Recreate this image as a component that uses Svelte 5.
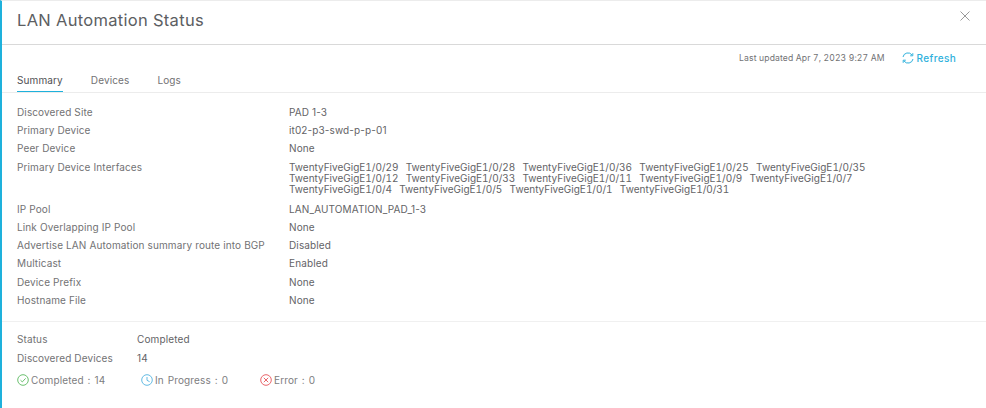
<script lang="ts">
  const summary = [
    { label: "Discovered Site", value: "PAD 1-3" },
    { label: "Primary Device", value: "it02-p3-swd-p-p-01" },
    { label: "Peer Device", value: "None" },
    {
      label: "Primary Device Interfaces",
      lines: [
        ["29", "28", "36", "25", "35"],
        ["12", "33", "11", "9", "7"],
        ["4", "5", "1", "31"],
      ],
    },
    { label: "IP Pool", value: "LAN_AUTOMATION_PAD_1-3" },
    { label: "Link Overlapping IP Pool", value: "None" },
    { label: "Advertise LAN Automation summary route into BGP", value: "Disabled" },
    { label: "Multicast", value: "Enabled" },
    { label: "Device Prefix", value: "None" },
    { label: "Hostname File", value: "None" },
  ];

  const tabs = ["Summary", "Devices", "Logs"];
</script>

<div class="panel">
  <header class="head">
    <h1>LAN Automation Status</h1>
    <svg class="close" width="10" height="10" viewBox="0 0 10 10" aria-label="Close">
      <path d="M.5.5l9 9M9.500.5l-9 9" />
    </svg>
  </header>

  <div class="updated">
    <span>Last updated Apr 7, 2023 9:27 AM</span>
    <span class="refresh">
      <svg width="12" height="12" viewBox="0 0 12 12">
        <path d="M1 5A5 5 0 0 1 10 3M11 7A5 5 0 0 1 2 9" />
        <path class="tip" d="M10.800 1.200v2.600H8.200M1.200 10.800V8.200h2.600" />
      </svg>
      Refresh
    </span>
  </div>

  <nav class="tabs">
    {#each tabs as tab, i}
      <span class="tab" class:active={i === 0}>{tab}</span>
    {/each}
  </nav>

  <dl class="summary">
    {#each summary as row}
      <div class="row">
        <dt>{row.label}</dt>
        <dd>
          {#if row.lines}
            {#each row.lines as line}
              <div class="ports">
                {#each line as port}
                  <span>TwentyFiveGigE1/0/{port}</span>
                {/each}
              </div>
            {/each}
          {:else}
            {row.value}
          {/if}
        </dd>
      </div>
    {/each}
  </dl>

  <section class="status">
    <div class="line">
      <span class="key">Status</span>
      <span class="val">Completed</span>
    </div>
    <div class="line">
      <span class="key">Discovered Devices</span>
      <span class="val">14</span>
    </div>
    <div class="counts">
      <span class="count first">
        <svg class="green" width="12" height="12" viewBox="0 0 12 12">
          <circle cx="6" cy="6" r="5.300" />
          <path d="M3.500 6.200l1.800 1.700 3.300-3.500" />
        </svg>
        Completed : 14
      </span>
      <span class="count second">
        <svg class="blue" width="12" height="12" viewBox="0 0 12 12">
          <circle cx="6" cy="6" r="5.300" />
          <path d="M6 3v3.300l2.600 1.400" />
        </svg>
        In Progress : 0
      </span>
      <span class="count">
        <svg class="red" width="12" height="12" viewBox="0 0 12 12">
          <circle cx="6" cy="6" r="5.300" />
          <path d="M3.800 3.800l4.400 4.400M8.200 3.800l-4.400 4.400" />
        </svg>
        Error : 0
      </span>
    </div>
  </section>
</div>

<style>
  :global(body) {
    background: #fff;
  }

  .panel {
    box-sizing: border-box;
    width: 986px;
    height: 408px;
    overflow: hidden;
    background: #fff;
    border-left: 2px solid #1eb1dc;
    border-top: 1px solid #ececec;
    font-family: Inter, "Open Sans", sans-serif;
    font-size: 10px;
    letter-spacing: 0.12px;
    color: #636366;
  }

  .head {
    display: flex;
    align-items: center;
    justify-content: space-between;
    box-sizing: border-box;
    height: 44px;
    padding: 0 16px 6px 15px;
    border-bottom: 1px solid #d9d9d9;
  }

  h1 {
    margin: 0;
    font-size: 16.500px;
    font-weight: 400;
    letter-spacing: 0.3px;
    color: #5c5e62;
  }

  .close {
    margin-top: -7px;
    fill: none;
    stroke: #9a9a9a;
  }

  .updated {
    display: flex;
    justify-content: flex-end;
    align-items: center;
    gap: 17px;
    height: 25px;
    margin-bottom: 2px;
    padding-right: 30px;
    font-size: 8.600px;
    font-variant-numeric: tabular-nums;
    color: #727274;
  }

  .refresh {
    display: flex;
    align-items: center;
    gap: 3px;
    font-size: 10px;
    letter-spacing: 0.35px;
    font-weight: 500;
    color: #2fb1dc;
  }

  .refresh svg {
    fill: none;
    stroke: #2fb1dc;
  }

  .tabs {
    display: flex;
    gap: 28px;
    height: 20px;
    padding-left: 15px;
    border-bottom: 1px solid #ececec;
  }

  .tab {
    box-sizing: border-box;
    height: 20px;
    line-height: 16px;
    color: #727274;
  }

  .tab.active {
    color: #505053;
    border-bottom: 1px solid #1eb1dc;
  }

  .summary {
    margin: 9.700px 0 0;
    padding: 0 15px;
    border-bottom: 1px solid #f0f0f0;
    height: 218.300px;
  }

  .row {
    display: flex;
    line-height: 18.300px;
  }

  dt {
    width: 272px;
    flex-shrink: 0;
    color: #727274;
  }

  dd {
    margin: 0;
    color: #636366;
  }

  .ports {
    display: flex;
    gap: 7.300px;
    line-height: 11px;
    letter-spacing: 0;
    font-variant-numeric: tabular-nums;
  }

  .ports:first-child {
    margin-top: 4px;
  }

  .ports:last-child {
    margin-bottom: 5px;
  }

  .status {
    padding: 8px 15px 0;
  }

  .line {
    display: flex;
    line-height: 19px;
  }

  .key {
    width: 120px;
    color: #727274;
  }

  .val {
    color: #636366;
  }

  .counts {
    display: flex;
    margin-top: 6px;
  }

  .count {
    display: flex;
    align-items: center;
    gap: 2px;
    word-spacing: 1px;
    color: #7d7d80;
  }

  .first {
    width: 124px;
  }

  .second {
    width: 119px;
  }

  .count svg {
    fill: none;
    stroke-width: 1;
  }

  .green { stroke: #6cc070; }
  .blue { stroke: #64bbe3; }
  .red { stroke: #e9656b; }
</style>
